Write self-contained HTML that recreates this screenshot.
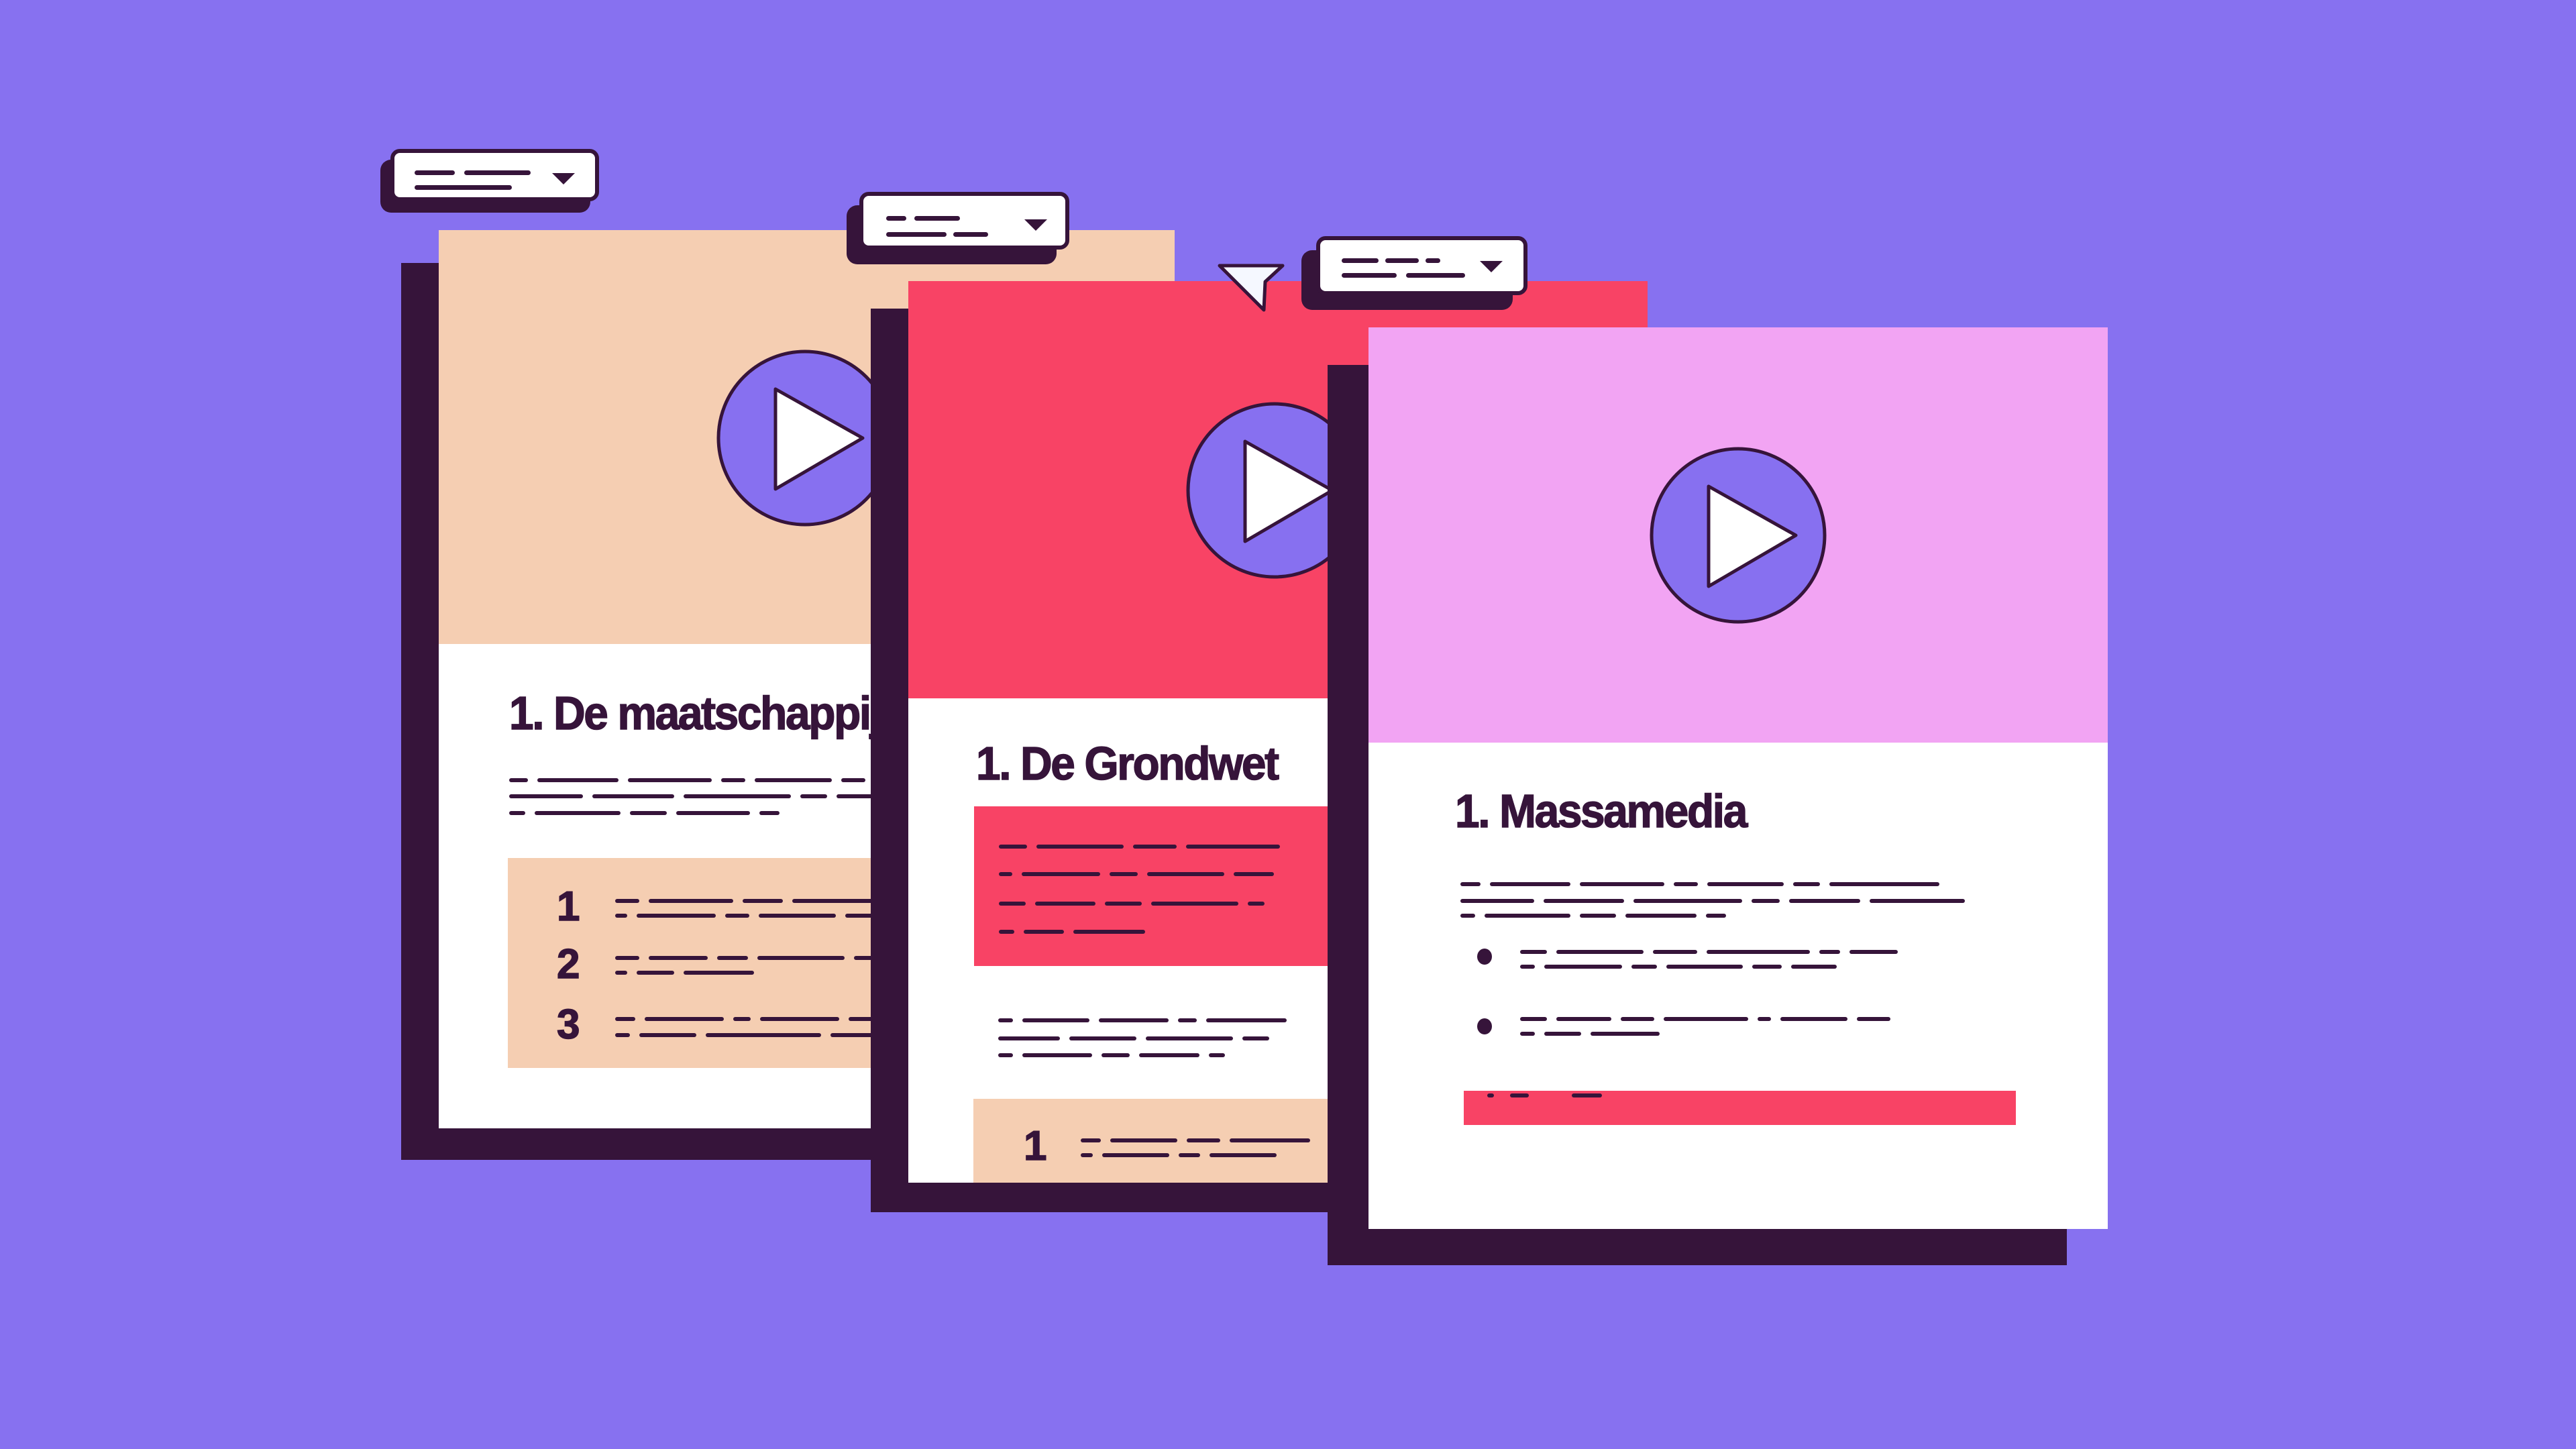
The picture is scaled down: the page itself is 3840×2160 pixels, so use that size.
<!DOCTYPE html>
<html><head><meta charset="utf-8"><style>
*{margin:0;padding:0;box-sizing:border-box}
body{width:3840px;height:2160px;background:#8771F0;position:relative;overflow:hidden;font-family:"Liberation Sans",sans-serif}
.a{position:absolute}
.dk{background:#36143A}
.ln{position:absolute;height:6px;display:flex;gap:14px;white-space:nowrap}
.ln i{display:block;height:6px;background:#36143A;border-radius:3px;flex:none}
h1{position:absolute;font-size:70px;font-weight:bold;color:#36143A;letter-spacing:-2.5px;white-space:nowrap;line-height:1;transform:scaleX(0.94);transform-origin:left top;-webkit-text-stroke:1.5px #36143A}
.num{position:absolute;font-size:62px;font-weight:bold;color:#36143A;line-height:1;-webkit-text-stroke:1.5px #36143A}
.dd{position:absolute;background:#fff;border:6px solid #36143A;border-radius:14px}
.dds{position:absolute;background:#36143A;border-radius:16px}
.dd i{position:absolute;height:7px;background:#36143A;border-radius:4px}
.arr{position:absolute;width:0;height:0;border-left:17px solid transparent;border-right:17px solid transparent;border-top:17px solid #36143A}
</style></head><body>

<!-- dropdown 1 -->
<div class="dds" style="left:567px;top:238px;width:313px;height:79px"></div>
<div class="dd" style="left:582px;top:222px;width:311px;height:78px">
<i style="left:30px;top:26px;width:60px"></i><i style="left:104px;top:26px;width:99px"></i><i style="left:30px;top:48px;width:145px"></i>
<div class="arr" style="left:235px;top:30px"></div></div>

<!-- CARD 1 -->
<div class="a dk" style="left:598px;top:392px;width:800px;height:1337px"></div>
<div class="a" style="left:654px;top:343px;width:1097px;height:1339px;background:#fff;overflow:hidden">
  <div class="a" style="left:0;top:0;width:1097px;height:617px;background:#F5CEB2"></div>
  <svg class="a" style="left:411px;top:175px" width="270" height="270"><circle cx="135" cy="135" r="129" fill="#8770F0" stroke="#36143A" stroke-width="5"/><polygon points="91,62 91,211 221,135" fill="#fff" stroke="#36143A" stroke-width="5" stroke-linejoin="round"/></svg>
  <h1 style="left:105px;top:685px">1. De maatschappij</h1>
  <div class="ln" style="left:105px;top:817px"><i style="width:28px"></i><i style="width:121px"></i><i style="width:125px"></i><i style="width:36px"></i><i style="width:115px"></i><i style="width:36px"></i><i style="width:100px"></i></div>
  <div class="ln" style="left:105px;top:841px"><i style="width:110px"></i><i style="width:122px"></i><i style="width:160px"></i><i style="width:40px"></i><i style="width:120px"></i></div>
  <div class="ln" style="left:105px;top:866px"><i style="width:24px"></i><i style="width:128px"></i><i style="width:55px"></i><i style="width:110px"></i><i style="width:30px"></i></div>
  <div class="a" style="left:103px;top:936px;width:600px;height:313px;background:#F5CEB2">
    <div class="num" style="left:73px;top:42px">1</div>
    <div class="num" style="left:73px;top:128px">2</div>
    <div class="num" style="left:73px;top:218px">3</div>
    <div class="ln" style="left:160px;top:61px"><i style="width:36px"></i><i style="width:126px"></i><i style="width:60px"></i><i style="width:150px"></i></div>
    <div class="ln" style="left:160px;top:83px"><i style="width:18px"></i><i style="width:118px"></i><i style="width:36px"></i><i style="width:115px"></i><i style="width:50px"></i></div>
    <div class="ln" style="left:160px;top:146px"><i style="width:36px"></i><i style="width:88px"></i><i style="width:46px"></i><i style="width:130px"></i><i style="width:40px"></i></div>
    <div class="ln" style="left:160px;top:168px"><i style="width:18px"></i><i style="width:56px"></i><i style="width:105px"></i></div>
    <div class="ln" style="left:160px;top:237px"><i style="width:30px"></i><i style="width:118px"></i><i style="width:26px"></i><i style="width:118px"></i><i style="width:50px"></i></div>
    <div class="ln" style="left:160px;top:261px"><i style="width:22px"></i><i style="width:85px"></i><i style="width:172px"></i><i style="width:80px"></i></div>
  </div>
</div>

<!-- dropdown 2 -->
<div class="dds" style="left:1262px;top:306px;width:313px;height:88px"></div>
<div class="dd" style="left:1281px;top:286px;width:313px;height:86px">
<i style="left:34px;top:30px;width:30px"></i><i style="left:76px;top:30px;width:68px"></i><i style="left:34px;top:54px;width:90px"></i><i style="left:134px;top:54px;width:52px"></i>
<div class="arr" style="left:240px;top:35px"></div></div>

<!-- CARD 2 -->
<div class="a dk" style="left:1298px;top:460px;width:700px;height:1347px"></div>
<div class="a" style="left:1354px;top:419px;width:1102px;height:1344px;background:#fff;overflow:hidden">
  <div class="a" style="left:0;top:0;width:1102px;height:622px;background:#F84365"></div>
  <svg class="a" style="left:411px;top:177px" width="270" height="270"><circle cx="135" cy="135" r="129" fill="#8770F0" stroke="#36143A" stroke-width="5"/><polygon points="91,62 91,211 221,135" fill="#fff" stroke="#36143A" stroke-width="5" stroke-linejoin="round"/></svg>
  <h1 style="left:101px;top:684px">1. De Grondwet</h1>
  <div class="a" style="left:98px;top:783px;width:700px;height:238px;background:#F84365">
    <div class="ln" style="left:37px;top:57px"><i style="width:42px"></i><i style="width:130px"></i><i style="width:65px"></i><i style="width:140px"></i></div>
    <div class="ln" style="left:37px;top:98px"><i style="width:20px"></i><i style="width:117px"></i><i style="width:42px"></i><i style="width:115px"></i><i style="width:60px"></i></div>
    <div class="ln" style="left:37px;top:142px"><i style="width:40px"></i><i style="width:90px"></i><i style="width:55px"></i><i style="width:130px"></i><i style="width:25px"></i></div>
    <div class="ln" style="left:37px;top:184px"><i style="width:23px"></i><i style="width:60px"></i><i style="width:107px"></i></div>
  </div>
  <div class="ln" style="left:134px;top:1099px"><i style="width:22px"></i><i style="width:100px"></i><i style="width:104px"></i><i style="width:28px"></i><i style="width:120px"></i></div>
  <div class="ln" style="left:134px;top:1126px"><i style="width:92px"></i><i style="width:100px"></i><i style="width:130px"></i><i style="width:40px"></i></div>
  <div class="ln" style="left:134px;top:1151px"><i style="width:22px"></i><i style="width:104px"></i><i style="width:42px"></i><i style="width:90px"></i><i style="width:24px"></i></div>
  <div class="a" style="left:97px;top:1219px;width:700px;height:140px;background:#F5CEB2">
    <div class="num" style="left:75px;top:40px">1</div>
    <div class="ln" style="left:160px;top:59px"><i style="width:30px"></i><i style="width:100px"></i><i style="width:50px"></i><i style="width:120px"></i></div>
    <div class="ln" style="left:160px;top:81px"><i style="width:18px"></i><i style="width:100px"></i><i style="width:32px"></i><i style="width:100px"></i></div>
  </div>
</div>

<!-- cursor -->
<svg class="a" style="left:1810px;top:388px" width="110" height="82"><polygon points="8,8 102,8 76,32 74,74" fill="#F5F8FF" stroke="#36143A" stroke-width="5" stroke-linejoin="round"/></svg>

<!-- dropdown 3 -->
<div class="dds" style="left:1940px;top:373px;width:315px;height:89px"></div>
<div class="dd" style="left:1962px;top:352px;width:315px;height:88px">
<i style="left:32px;top:27px;width:55px"></i><i style="left:97px;top:27px;width:50px"></i><i style="left:157px;top:27px;width:22px"></i><i style="left:32px;top:49px;width:82px"></i><i style="left:128px;top:49px;width:88px"></i>
<div class="arr" style="left:238px;top:31px"></div></div>

<!-- CARD 3 -->
<div class="a dk" style="left:1979px;top:544px;width:1102px;height:1342px"></div>
<div class="a" style="left:2040px;top:488px;width:1102px;height:1344px;background:#fff;overflow:hidden">
  <div class="a" style="left:0;top:0;width:1102px;height:619px;background:#F2A4F3"></div>
  <svg class="a" style="left:416px;top:175px" width="270" height="270"><circle cx="135" cy="135" r="129" fill="#8770F0" stroke="#36143A" stroke-width="5"/><polygon points="91,62 91,211 221,135" fill="#fff" stroke="#36143A" stroke-width="5" stroke-linejoin="round"/></svg>
  <h1 style="left:129px;top:686px">1. Massamedia</h1>
  <div class="ln" style="left:137px;top:827px"><i style="width:30px"></i><i style="width:120px"></i><i style="width:126px"></i><i style="width:36px"></i><i style="width:114px"></i><i style="width:40px"></i><i style="width:164px"></i></div>
  <div class="ln" style="left:137px;top:852px"><i style="width:110px"></i><i style="width:120px"></i><i style="width:162px"></i><i style="width:42px"></i><i style="width:106px"></i><i style="width:142px"></i></div>
  <div class="ln" style="left:137px;top:874px"><i style="width:22px"></i><i style="width:128px"></i><i style="width:54px"></i><i style="width:106px"></i><i style="width:30px"></i></div>
  <div class="a dk" style="left:162px;top:926px;width:22px;height:24px;border-radius:50%"></div>
  <div class="ln" style="left:226px;top:928px"><i style="width:40px"></i><i style="width:130px"></i><i style="width:66px"></i><i style="width:154px"></i><i style="width:31px"></i><i style="width:72px"></i></div>
  <div class="ln" style="left:226px;top:950px"><i style="width:22px"></i><i style="width:116px"></i><i style="width:38px"></i><i style="width:114px"></i><i style="width:44px"></i><i style="width:68px"></i></div>
  <div class="a dk" style="left:162px;top:1030px;width:22px;height:24px;border-radius:50%"></div>
  <div class="ln" style="left:226px;top:1028px"><i style="width:40px"></i><i style="width:82px"></i><i style="width:50px"></i><i style="width:126px"></i><i style="width:20px"></i><i style="width:100px"></i><i style="width:50px"></i></div>
  <div class="ln" style="left:226px;top:1050px"><i style="width:22px"></i><i style="width:55px"></i><i style="width:103px"></i></div>
  <div class="a" style="left:142px;top:1138px;width:823px;height:51px;background:#F84365">
    <div class="ln" style="left:35px;top:4px;gap:24px"><i style="width:10px"></i><i style="width:28px"></i><i style="width:45px;margin-left:40px"></i></div>
  </div>
</div>

</body></html>
